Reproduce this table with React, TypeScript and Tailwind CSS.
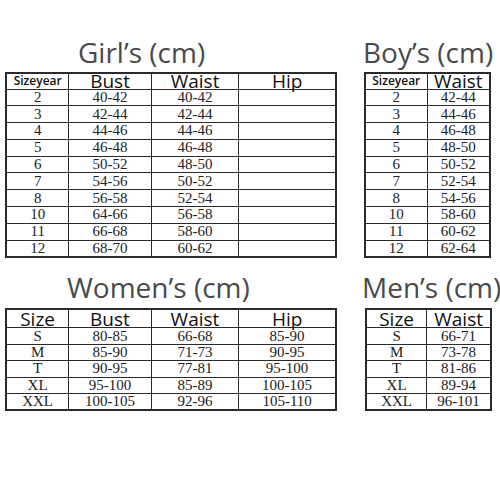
import React from 'react';

type Row = string[];

const girls: Row[] = [
  ['2', '40-42', '40-42', ''],
  ['3', '42-44', '42-44', ''],
  ['4', '44-46', '44-46', ''],
  ['5', '46-48', '46-48', ''],
  ['6', '50-52', '48-50', ''],
  ['7', '54-56', '50-52', ''],
  ['8', '56-58', '52-54', ''],
  ['10', '64-66', '56-58', ''],
  ['11', '66-68', '58-60', ''],
  ['12', '68-70', '60-62', ''],
];

const boys: Row[] = [
  ['2', '42-44'],
  ['3', '44-46'],
  ['4', '46-48'],
  ['5', '48-50'],
  ['6', '50-52'],
  ['7', '52-54'],
  ['8', '54-56'],
  ['10', '58-60'],
  ['11', '60-62'],
  ['12', '62-64'],
];

const women: Row[] = [
  ['S', '80-85', '66-68', '85-90'],
  ['M', '85-90', '71-73', '90-95'],
  ['T', '90-95', '77-81', '95-100'],
  ['XL', '95-100', '85-89', '100-105'],
  ['XXL', '100-105', '92-96', '105-110'],
];

const men: Row[] = [
  ['S', '66-71'],
  ['M', '73-78'],
  ['T', '81-86'],
  ['XL', '89-94'],
  ['XXL', '96-101'],
];

const title = "font-['Open_Sans',sans-serif] text-[#4a4a4a] text-[28px] leading-none whitespace-nowrap";
const cellFont = "font-['Liberation_Serif',serif] text-[15px] text-[#222] leading-none";
const headFont = "font-['Open_Sans',sans-serif] text-[#111] leading-[14px]";

function SizeTable({
  head,
  rows,
  widths,
  headH,
  rowH,
  firstHeadSmall,
}: {
  head: string[];
  rows: Row[];
  widths: number[];
  headH: number;
  rowH: number;
  firstHeadSmall?: boolean;
}) {
  return (
    <table className="border-collapse border-2 border-[#2a2a2a] table-fixed">
      <colgroup>
        {widths.map((w, i) => (
          <col key={i} style={{ width: w }} />
        ))}
      </colgroup>
      <thead>
        <tr style={{ height: headH }}>
          {head.map((h, i) => (
            <th
              key={i}
              className={`border border-[#2a2a2a] p-0 font-normal text-center ${headFont} ${
                firstHeadSmall && i === 0 ? 'text-[12px] font-semibold' : 'text-[19px]'
              }`}
            >
              {h}
            </th>
          ))}
        </tr>
      </thead>
      <tbody>
        {rows.map((r, ri) => (
          <tr key={ri} style={{ height: rowH }}>
            {r.map((c, ci) => (
              <td key={ci} className={`border border-[#2a2a2a] p-0 text-center ${cellFont}`}>
                {c}
              </td>
            ))}
          </tr>
        ))}
      </tbody>
    </table>
  );
}

export default function App() {
  return (
    <div className="w-[500px] h-[500px] bg-white overflow-hidden">
      <div className="flex pt-[38px]">
        <div className="ml-[5px] w-[332px]">
          <div className={`${title} pl-[73px] h-[34px]`}>Girl’s (cm)</div>
          <SizeTable
            head={['Sizeyear', 'Bust', 'Waist', 'Hip']}
            rows={girls}
            widths={[63, 83, 88, 98]}
            headH={16}
            rowH={16.8}
            firstHeadSmall
          />
        </div>
        <div className="ml-[27px] w-[127px]">
          <div className={`${title} -ml-[1px] h-[34px]`}>Boy’s (cm)</div>
          <SizeTable
            head={['Sizeyear', 'Waist']}
            rows={boys}
            widths={[63, 64]}
            headH={16}
            rowH={16.8}
            firstHeadSmall
          />
        </div>
      </div>
      <div className="flex pt-[15px]">
        <div className="ml-[5px] w-[332px]">
          <div className={`${title} pl-[62px] h-[35px]`}>Women’s (cm)</div>
          <SizeTable
            head={['Size', 'Bust', 'Waist', 'Hip']}
            rows={women}
            widths={[63, 83, 88, 98]}
            headH={19}
            rowH={16.4}
          />
        </div>
        <div className="ml-[28px] w-[127px]">
          <div className={`${title} -ml-[3px] h-[35px]`}>Men’s (cm)</div>
          <SizeTable
            head={['Size', 'Waist']}
            rows={men}
            widths={[62, 65]}
            headH={19}
            rowH={16.4}
          />
        </div>
      </div>
    </div>
  );
}
